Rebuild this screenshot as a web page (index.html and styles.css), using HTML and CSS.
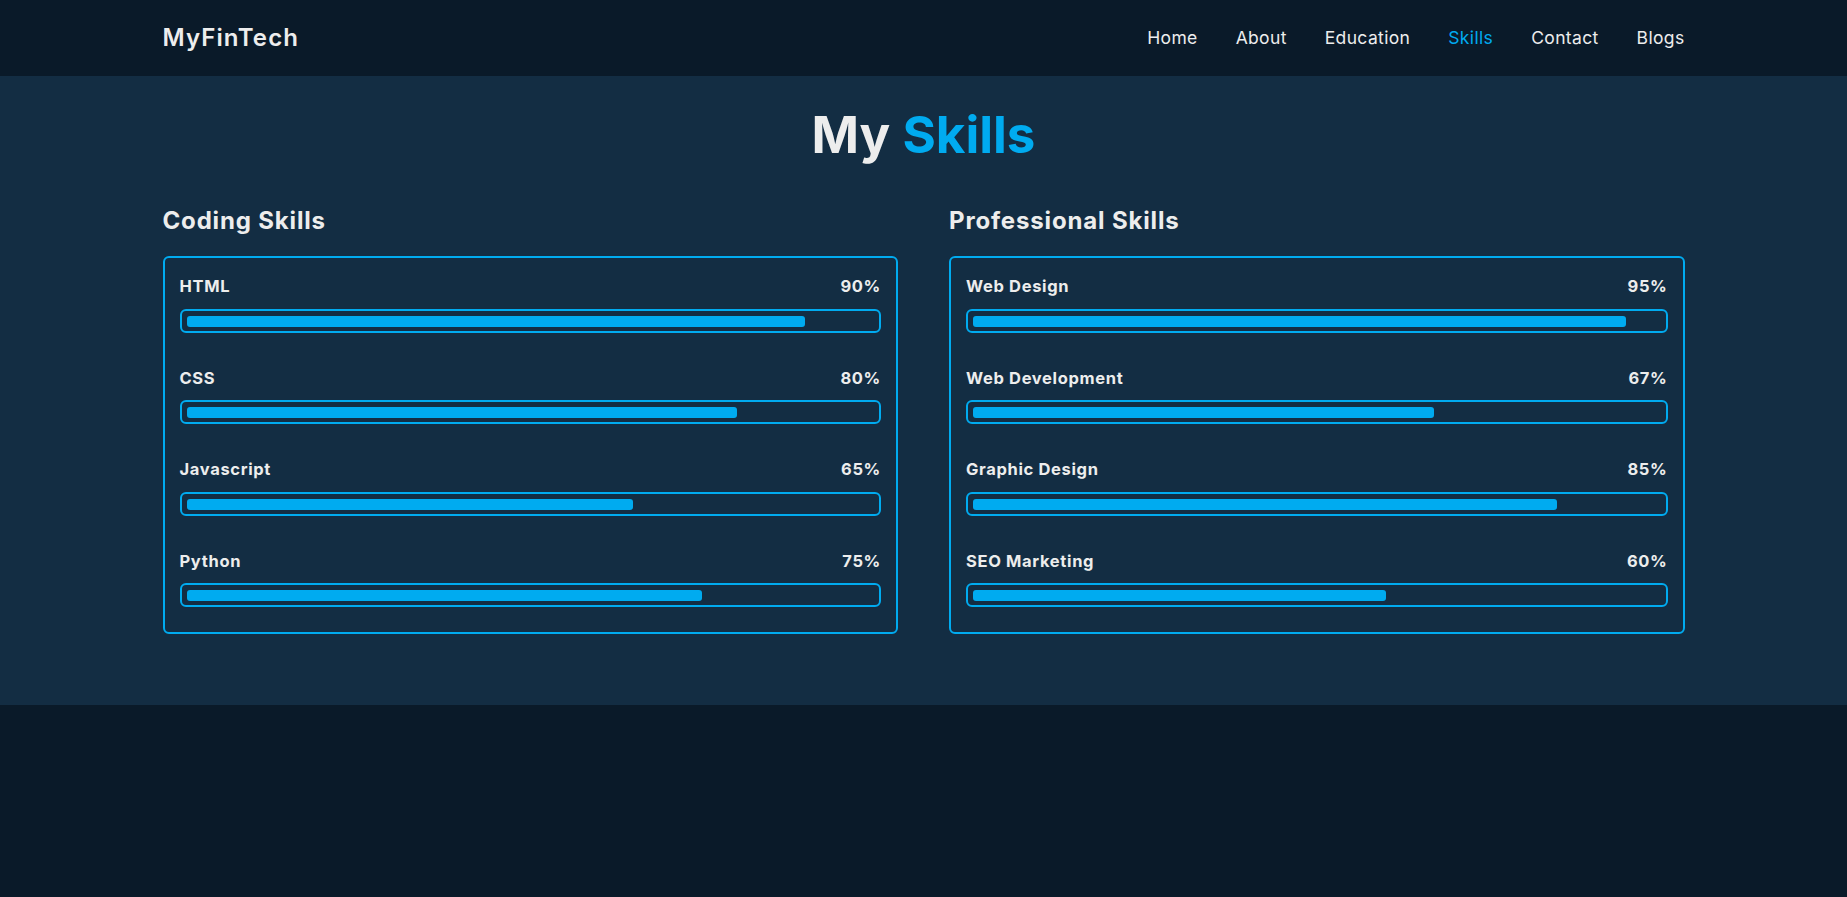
FILE: index.html
```html
<!DOCTYPE html>
<html lang="en">
<head>
<meta charset="utf-8">
<title>MyFinTech - Skills</title>
<link rel="stylesheet" href="styles.css">
</head>
<body>
<header class="header">
  <div class="container header-inner">
    <a class="logo" href="#">MyFinTech</a>
    <nav class="nav">
      <a href="#">Home</a>
      <a href="#">About</a>
      <a href="#">Education</a>
      <a href="#" class="active">Skills</a>
      <a href="#">Contact</a>
      <a href="#">Blogs</a>
    </nav>
  </div>
</header>
<section class="skills">
  <h1 class="title">My <span>Skills</span></h1>
  <div class="container skills-grid">
    <div class="column">
      <h2 class="col-title">Coding Skills</h2>
      <div class="card">
        <div class="skill">
          <div class="skill-head"><span>HTML</span><span>90%</span></div>
          <div class="bar"><div class="fill" style="width:90%"></div></div>
        </div>
        <div class="skill">
          <div class="skill-head"><span>CSS</span><span>80%</span></div>
          <div class="bar"><div class="fill" style="width:80%"></div></div>
        </div>
        <div class="skill">
          <div class="skill-head"><span>Javascript</span><span>65%</span></div>
          <div class="bar"><div class="fill" style="width:65%"></div></div>
        </div>
        <div class="skill">
          <div class="skill-head"><span>Python</span><span>75%</span></div>
          <div class="bar"><div class="fill" style="width:75%"></div></div>
        </div>
      </div>
    </div>
    <div class="column">
      <h2 class="col-title">Professional Skills</h2>
      <div class="card">
        <div class="skill">
          <div class="skill-head"><span>Web Design</span><span>95%</span></div>
          <div class="bar"><div class="fill" style="width:95%"></div></div>
        </div>
        <div class="skill">
          <div class="skill-head"><span>Web Development</span><span>67%</span></div>
          <div class="bar"><div class="fill" style="width:67%"></div></div>
        </div>
        <div class="skill">
          <div class="skill-head"><span>Graphic Design</span><span>85%</span></div>
          <div class="bar"><div class="fill" style="width:85%"></div></div>
        </div>
        <div class="skill">
          <div class="skill-head"><span>SEO Marketing</span><span>60%</span></div>
          <div class="bar"><div class="fill" style="width:60%"></div></div>
        </div>
      </div>
    </div>
  </div>
</section>
</body>
</html>
```

FILE: styles.css
```css
* {
  box-sizing: border-box;
}

html, body {
  margin: 0;
  padding: 0;
}

body {
  background: #0a1a29;
  color: #ededed;
  font-family: Inter, "DejaVu Sans", sans-serif;
  min-height: 100vh;
}

.container {
  width: 1522px;
  margin: 0 auto;
}

.header {
  background: #0a1a29;
  height: 76px;
}

.header-inner {
  height: 100%;
  display: flex;
  align-items: center;
  justify-content: space-between;
}

.logo {
  color: #ededed;
  text-decoration: none;
  font-size: 24px;
  font-weight: 600;
  line-height: 1;
  letter-spacing: 0.045em;
}

.nav {
  display: flex;
  gap: 38px;
}

.nav a {
  color: #ededed;
  text-decoration: none;
  font-size: 17.5px;
  line-height: 1;
  letter-spacing: 0.02em;
}

.nav a.active {
  color: #00abf0;
}

.skills {
  background: #132d43;
  padding: 33px 0 71px;
}

.title {
  margin: 0;
  text-align: center;
  font-size: 51px;
  font-weight: 700;
  line-height: 1;
  color: #ededed;
}

.title span {
  color: #00abf0;
}

.skills-grid {
  margin-top: 49px;
  display: grid;
  grid-template-columns: 1fr 1fr;
  gap: 51px;
}

.col-title {
  margin: 0 0 23px;
  font-size: 24px;
  font-weight: 700;
  line-height: 1;
  letter-spacing: 0.035em;
}

.card {
  border: 2px solid #00abf0;
  border-radius: 6px;
  padding: 20px 15px 25px;
  display: flex;
  flex-direction: column;
  gap: 37px;
}

.skill-head {
  display: flex;
  justify-content: space-between;
  font-size: 16.5px;
  font-weight: 700;
  line-height: 1;
  margin-bottom: 14px;
  letter-spacing: 0.04em;
}

.bar {
  border: 2px solid #00abf0;
  border-radius: 6px;
  padding: 5px 5px 4px;
}

.fill {
  height: 11px;
  background: #00abf0;
  border-radius: 3px;
}
```
